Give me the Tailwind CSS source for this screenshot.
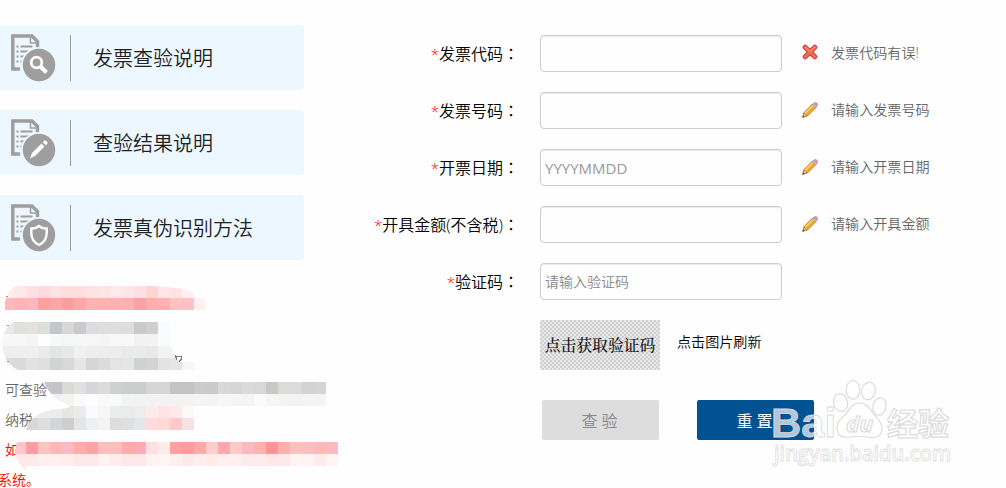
<!DOCTYPE html>
<html lang="zh-CN">
<head>
  <meta charset="UTF-8" />
  <meta name="viewport" content="width=device-width, initial-scale=1.0" />
  <title>发票查验</title>
  <script src="https://cdn.jsdelivr.net/npm/@tailwindcss/browser@4"></script>
</head>
<body class="relative w-[1006px] h-[488px] overflow-hidden bg-[#fefefe] text-black font-[350] font-['Open_Sans','Noto_Sans_CJK_SC',sans-serif]">

  <!-- Shared icons -->
  <svg class="hidden">
    <symbol id="doc" viewBox="0 0 46 48">
      <path d="M10 35H2.800V2H22L27.500 7.500V15" fill="none" stroke="#9e9e9e" stroke-width="3.400" />
      <path d="M20.500 2v7h7" fill="none" stroke="#9e9e9e" stroke-width="1.500" />
      <path d="M6.500 12.500h2m2 0h12M6.500 17.500h2m2 0h10M6.500 22.500h2m2 0h5M6.500 27.500h2m2 0h3" stroke="#9e9e9e" stroke-width="2" />
      <circle cx="29" cy="31" r="18" fill="#ecf7ff" />
      <circle cx="29" cy="31" r="16.200" fill="#9e9e9e" />
    </symbol>
    <symbol id="pencil" viewBox="0 0 16 16">
      <path d="M.8 15.200 2 10.500 10.500 2 14 5.500 5.500 14z" fill="#f7a52c" stroke="#a8742c" stroke-width=".8" />
      <path d="M3 11.500 11 3.500" stroke="#ffd66b" stroke-width="1.500" />
      <path d="M.8 15.200 2 11 5 14z" fill="#e9c68c" stroke="#8b7050" stroke-width=".6" />
      <path d="M.6 15.400l.5-2 1.500 1.500z" fill="#444" />
      <path d="M10.300 2.700 11.700 1.300 14.700 4.300 13.300 5.700z" fill="#c8ced4" stroke="#7c848c" stroke-width=".6" />
      <path d="M11.700 1.300C13 0 14 .4 15 1.200S16 3 14.700 4.300z" fill="#d79ac6" stroke="#a672a0" stroke-width=".6" />
    </symbol>
  </svg>

  <div class="flex">
    <!-- Left menu -->
    <div class="w-[304px] pt-[25px] shrink-0">
      <div class="flex flex-col gap-5 text-xl text-[#222]">
        <a class="flex items-center h-[65px] bg-[#ecf7ff] rounded-r pl-[10px]">
          <svg class="w-[46px] h-12 shrink-0">
            <use href="#doc" />
            <circle cx="26.500" cy="28.500" r="5.300" fill="none" stroke="#fff" stroke-width="2.800" />
            <path d="M30.500 32.500 36.500 38.500" stroke="#fff" stroke-width="4" />
          </svg>
          <span class="w-px h-[46px] ml-[14px] mr-[22px] bg-[#9b9fa3]"></span>
          <span class="pt-[2px]">发票查验说明</span>
        </a>
        <a class="flex items-center h-[65px] bg-[#ecf7ff] rounded-r pl-[10px]">
          <svg class="w-[46px] h-12 shrink-0">
            <use href="#doc" />
            <path d="M20 39.500 22 34 31.500 24.500 34.500 27.500 25 37zM32.800 23.200 34.500 21.500Q36 21 37.500 23.500V24.500L35.800 26.200z" fill="#fff" />
          </svg>
          <span class="w-px h-[46px] ml-[14px] mr-[22px] bg-[#9b9fa3]"></span>
          <span class="pt-[2px]">查验结果说明</span>
        </a>
        <a class="flex items-center h-[65px] bg-[#ecf7ff] rounded-r pl-[10px]">
          <svg class="w-[46px] h-12 shrink-0">
            <use href="#doc" />
            <path d="M29 22Q25.500 25 21.300 24.500V29Q21.500 37.500 29 41Q36.500 37.500 36.700 29V24.500Q32.500 25 29 22z" fill="none" stroke="#fff" stroke-width="2.400" />
          </svg>
          <span class="w-px h-[46px] ml-[14px] mr-[22px] bg-[#9b9fa3]"></span>
          <span class="pt-[2px]">发票真伪识别方法</span>
        </a>
      </div>

      <!-- Notice -->
      <div class="mt-[115px] text-sm leading-[30px] text-[#666]">
        <p class="pl-[5px]">可查验</p>
        <p class="pl-[5px]">纳税</p>
        <p class="pl-[5px] text-[#f00]">如</p>
        <p class="-ml-[2px] text-[#f00]">系统。</p>
      </div>
    </div>

    <!-- Form -->
    <form class="pt-[35px] flex flex-col gap-5">
      <div class="flex items-center h-[37px]">
        <label class="w-[215px] text-right text-base"><span class="text-[#f00] text-[15px]">*</span>发票代码<span lang="zh-TW" class="font-['Noto_Sans_CJK_TC']">：</span></label>
        <input type="text" class="ml-[21px] w-[242px] h-[37px] border border-[#ccc] rounded px-1 text-sm shadow-[inset_0_1px_1px_rgba(0,0,0,0.075)]">
        <svg class="ml-5 w-4 h-4 -mt-[3px]" viewBox="0 0 16 16">
          <path d="M3.200 3.200 12.800 12.800M12.800 3.200 3.200 12.800" stroke="#b9433b" stroke-width="5" stroke-linecap="round" />
          <path d="M3.200 3.200 12.800 12.800M12.800 3.200 3.200 12.800" stroke="#f8684f" stroke-width="3.200" stroke-linecap="round" />
          <path d="M3 3 8 7.500 13 3" stroke="#ff9c86" stroke-width="1" fill="none" />
        </svg>
        <span class="ml-[13px] -mt-[2px] text-[14.100px] text-[#666]">发票代码有误!</span>
      </div>
      <div class="flex items-center h-[37px]">
        <label class="w-[215px] text-right text-base"><span class="text-[#f00] text-[15px]">*</span>发票号码<span lang="zh-TW" class="font-['Noto_Sans_CJK_TC']">：</span></label>
        <input type="text" class="ml-[21px] w-[242px] h-[37px] border border-[#ccc] rounded px-1 text-sm shadow-[inset_0_1px_1px_rgba(0,0,0,0.075)]">
        <svg class="ml-5 w-4 h-4 -mt-[2px]"><use href="#pencil" /></svg>
        <span class="ml-[13px] -mt-[2px] text-[14.100px] text-[#666]">请输入发票号码</span>
      </div>
      <div class="flex items-center h-[37px]">
        <label class="w-[215px] text-right text-base"><span class="text-[#f00] text-[15px]">*</span>开票日期<span lang="zh-TW" class="font-['Noto_Sans_CJK_TC']">：</span></label>
        <input type="text" placeholder="YYYYMMDD" class="ml-[21px] w-[242px] h-[37px] border border-[#ccc] rounded px-1 text-[15px] font-normal placeholder:text-[#999] shadow-[inset_0_1px_1px_rgba(0,0,0,0.075)]">
        <svg class="ml-5 w-4 h-4 -mt-[2px]"><use href="#pencil" /></svg>
        <span class="ml-[13px] -mt-[2px] text-[14.100px] text-[#666]">请输入开票日期</span>
      </div>
      <div class="flex items-center h-[37px]">
        <label class="w-[215px] text-right text-base whitespace-nowrap"><span class="text-[#f00] text-[15px]">*</span>开具金额(不含税)<span lang="zh-TW" class="font-['Noto_Sans_CJK_TC']">：</span></label>
        <input type="text" class="ml-[21px] w-[242px] h-[37px] border border-[#ccc] rounded px-1 text-sm shadow-[inset_0_1px_1px_rgba(0,0,0,0.075)]">
        <svg class="ml-5 w-4 h-4 -mt-[2px]"><use href="#pencil" /></svg>
        <span class="ml-[13px] -mt-[2px] text-[14.100px] text-[#666]">请输入开具金额</span>
      </div>
      <div class="flex items-center h-[37px]">
        <label class="w-[215px] text-right text-base"><span class="text-[#f00] text-[15px]">*</span>验证码<span lang="zh-TW" class="font-['Noto_Sans_CJK_TC']">：</span></label>
        <input type="text" placeholder="请输入验证码" class="ml-[21px] w-[242px] h-[37px] border border-[#ccc] rounded px-1 text-sm placeholder:text-[#888] shadow-[inset_0_1px_1px_rgba(0,0,0,0.075)]">
      </div>
      <div class="flex items-center pl-[236px]">
        <div class="w-[120px] h-[50px] flex items-center justify-center text-[15.800px] font-medium text-[#111] whitespace-nowrap font-['Noto_Serif_CJK_SC','Noto_Sans_CJK_SC',serif] bg-[repeating-conic-gradient(#d0d0d0_0_25%,#e8e8e8_0_50%)] bg-size-[4px_4px]">点击获取验证码</div>
        <span class="ml-[17px] -mt-[6px] text-[14.100px]">点击图片刷新</span>
      </div>
      <div class="flex pl-[238px] pt-[10px] gap-[38px] text-base">
        <button type="button" class="w-[117px] h-10 rounded-xs bg-[#ddd] text-[#888] pt-[2px] pr-[2px]">查 验</button>
        <button type="button" class="w-[117px] h-10 rounded-xs bg-[#005293] text-white pt-[2px] pr-[2px] font-normal">重 置</button>
      </div>
    </form>
  </div>

  <!-- Mosaic over the notice -->
  <svg class="absolute left-0 top-[275px] w-[350px] h-[213px]" viewBox="0 275 350 213" shape-rendering="crispEdges">
    <clipPath id="mask">
      <path d="M15 286H150Q198 287 206 302V310H5V302Q8 290 15 286z" />
      <path d="M13 322H170V346Q174 352 176 358L180 362H194V370H18Q2 362 2 342Q4 328 13 322z" />
      <path d="M44 382H326V406H70Q50 398 44 382z" />
      <path d="M70 406H194V430H26Q32 410 60 409Q70 408 70 406z" />
      <path d="M17 442H338V466H26V471Q14 460 15 450z" />
    </clipPath>
    <g id="mosaic" clip-path="url(#mask)"></g>
    <path d="M6 296.500h2M7 325.500h2M7 361.500h2" stroke="#b98d5c" />
    <path d="M175 355.500l2 4M176 356.500h5v3l-2 2" fill="none" stroke="#777b88" />
  </svg>

  <!-- Watermark -->
  <svg class="absolute left-[760px] top-[370px] w-[210px] h-[110px]" viewBox="760 370 210 110">
    <g fill="#fff" fill-opacity=".7" stroke="#dcdcdc" stroke-width="1.200">
      <text x="771" y="436.500" font-family="Liberation Sans" font-weight="bold" font-size="41" textLength="65" lengthAdjust="spacingAndGlyphs" stroke="#d5dbe0" stroke-width=".8">Bai</text>
      <ellipse cx="840.500" cy="402.500" rx="7" ry="9" transform="rotate(-12 840.500 402.500)" />
      <ellipse cx="853" cy="390" rx="6.800" ry="9.300" />
      <ellipse cx="868.500" cy="391" rx="6.800" ry="8.800" transform="rotate(14 868.500 391)" />
      <ellipse cx="879.500" cy="406.500" rx="6.500" ry="8.800" transform="rotate(12 879.500 406.500)" />
      <path d="M859 403C853 403 850 408 846 414C841 419 837 422 837 428C837 436 843 438 850 437C856 436 862 436 868 437C876 439 882 436 882 428C882 422 877 418 873 413C869 407 866 403 859 403z" />
      <text x="846" y="432" font-family="Open Sans" font-style="italic" font-weight="bold" font-size="22" textLength="27" lengthAdjust="spacingAndGlyphs">du</text>
      <text x="887" y="435" font-family="Noto Sans CJK SC" font-weight="bold" font-size="31" textLength="62" lengthAdjust="spacingAndGlyphs">经验</text>
      <text x="774" y="461" font-family="Open Sans" font-size="21" font-weight="600" textLength="177" lengthAdjust="spacingAndGlyphs" stroke="#e0e0e0" stroke-width=".9">jingyan.baidu.com</text>
    </g>
  </svg>

  <script>
    // each row: y, x of the first cell, cell colors (12px cells)
    const rows = [
      [286, 2, "fff0ee ffe8e8 ffe0e2 ffdadc ffe3e1 ffdfdb ffdedd ffe3e3 ffe4e4 ffe9ed ffe4e8 ffdfe3 ffd5d3 ffe6e6 ffe3e1 ffeff0 ffffff"],
      [298, 2, "ffb8ba ffb4b8 ffb9bb ff9fa0 ffa5a7 ff9c9f ffa6ac ffb3b5 ffb2ae ffb0b0 ffb0b4 ffa0a6 ffadad ffb0b2 ffc2c2 ffc2c4 ffeff0"],
      [322, 2, "e8e8e8 e0e0e0 e5e1df dadedd c6c7ca d8d8d8 cbcac8 dbdcdf dfdfdf dedede dddddd c9c9c9 d0cfcd f8fbff"],
      [334, 2, "f7f7f7 f6f8f7 f3f6f5 fdffff f6f9f8 f5f7f5 f5f7f5 f5f6f5 f5f5f5 f8f8f8 f8f8f8 f2f2f2 f2f3f2 f8fcfb"],
      [346, 2, "eeeeee efefef eff0ef ebebeb e4e6e6 e7e8e8 f1f1f1 eeeeee ededed ededed eaeaea eaeceb e8e9e9 f2f3f3 f2f3f3"],
      [358, 2, "dcdcdc dadada e2e2e2 dfdfdf d2d3d4 d8d8d7 e6e6e6 d7d5d3 dbdbda e3e4e4 e6e6e7 d0d1d3 d5d4d4 e3e3e4 e5e6e9 f7f7f7"],
      [382, 38, "c8c8c8 c4c5c9 dbdad8 e0e0e0 d5d6d7 dedada cfd0d1 cccdcc cbcccc d6d6d6 d5d5d7 c2c3c5 c5c3c0 cbcbcb cacaca d8d8d8 d6d6d6 dadada d8d8d8 cac8c6 dadcda dbdbdb d5d1d2 d5d5d7"],
      [394, 38, "f1f1f1 f1f1f1 f4f4f2 fafafa fdfdff f9f9f9 f9fbf9 f3f4f4 f2f2f2 f3f3f3 f3f3f3 f3f3f3 f3f3f3 f5f5f5 f4f4f4 f7f7f4 f5f5f5 f4f4f4 f9fbff f6f6f4 f4f4f4 f3f3f3 f4f4f4 f4f4f4"],
      [406, 26, "eeeeee ededed ececec e5e7e3 ebebeb f8fbff f5f6f7 ebecec eaebeb ededed ffecea ffe3e6 ffe9e9 fff8f8"],
      [418, 26, "d8d8d8 dfdfdd d2d6d8 cfcfcf e5e5e5 eef0f2 f5f4f4 dcdddc dfe0df e4e6e9 ffdcdb ffd8d8 ffc9c7 f4e2e4"],
      [442, 14, "ffc5ca ff9c9f ffc3c0 ffb8b7 ffb9c3 ffadab ffa3a4 ffbfbf ffbebe ffa9a9 ffadb4 ffdfe1 ffebea ffa1a1 ff9aa0 ffa8a8 ffcdcf ffa7ad ffcac8 ffb8c0 ffb3ae ff9396 ffb1ab ffc2ba ffbdc4 ffbab6 ffbac0"],
      [454, 14, "ffe8e8 ffeaea ffefee ffefee ffeceb ffe8e8 ffe8e9 fff2f2 ffedeb ffe8e8 ffe9e8 fff2f2 fff5f5 ffefef ffe8ea ffeeee ffebe8 ffefef ffefef ffeaeb ffebeb ffe8e6 ffe8ea fff4f4 fff4f2 ffebec fff5f4"],
      [466, 14, "ffe8e8"]
    ];
    const g = document.getElementById("mosaic");
    rows.forEach(([y, x, colors]) => {
      colors.split(" ").forEach((c, i) => {
        const r = document.createElementNS("http://www.w3.org/2000/svg", "rect");
        r.setAttribute("x", x + i * 12);
        r.setAttribute("y", y);
        r.setAttribute("width", 12);
        r.setAttribute("height", 12);
        r.setAttribute("fill", "#" + c);
        g.appendChild(r);
      });
    });
  </script>

</body>
</html>
